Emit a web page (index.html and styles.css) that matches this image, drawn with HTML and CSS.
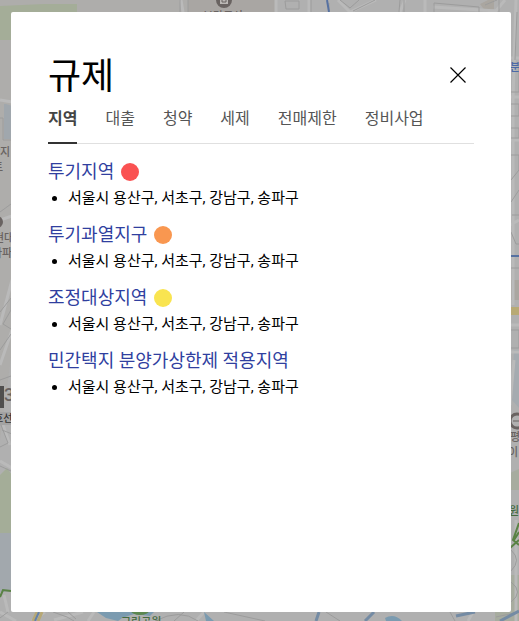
FILE: index.html
```
<!DOCTYPE html>
<html lang="ko">
<head>
  <meta charset="UTF-8">
  <meta name="viewport" content="width=device-width, initial-scale=1">
  <title>규제</title>
  <link rel="stylesheet" href="styles.css">
</head>
<body>
  <!-- Map behind the modal -->
  <svg class="map" viewBox="0 0 519 621" preserveAspectRatio="xMidYMid slice" aria-hidden="true">
    <rect width="519" height="621" fill="#aeadab"/>
    <path d="M276 0H519V621H0V440L12 350V250L276 12Z" fill="#b0b0b0"/>
    <path d="M0 6L44 4H77V40H0Z" fill="#a4ad98"/>
    <path d="M188 0H276V14H188Z" fill="#a9a6a3"/>
    <path d="M0 533H12V592H0Z" fill="#a2a8ad"/>
    <path d="M0 475L7 468L12 475V533H0Z" fill="#a4ad98"/>
    <path d="M510 473L519 469V490H510ZM510 575H519V621H495V612H510Z" fill="#a7ac9f"/>
    <path d="M510 280H519V300H510Z" fill="#aaa6a0"/>
    <path d="M514 350H519V408L512 400Z" fill="#a5abb0"/>
    <path d="M6 104L12 106V139H4V104Z" fill="#a0a7ad"/>
    <path d="M480 4L488 0H494V9L486 12Z" fill="#aaa6a0"/>

    <!-- roads -->
    <g fill="none" stroke="#bababa" stroke-width="3">
      <path d="M181 0L183 12M276 0V12M309 0V12M338 0L350 12M376 0L350 12M405 0L400 12M425 0V12M433 7L497 11M505 0L495 12M516 0L513 100V305M510 58H519M510 97H519M510 140H519M510 225L519 220"/>
      <path d="M0 220L12 216M0 325L12 280M0 365L12 330M3 425L10 445M0 461L12 468M510 325H519M510 352H519M510 405L514 360M516 520V621M0 100L12 102"/>
      <path d="M0 612L16 621M4 595L8 612M45 612L32 621M54 620L83 612M88 621L94 612M196 621L204 612M468 621L473 612"/>
    </g>
    <g fill="none" stroke="#9c9c9c" stroke-width="1">
      <path d="M180 0V12M188 0V12M285 1H299V9H286ZM311 0V12M329 12V3M340 0L350 8L359 0M353 11L375 0M400 0L399 12M404 0V12M434 3L479 7V12M434 3V12M497 0L485 5M499 0V12"/>
      <path d="M517 12L515 60M511 63H519V92H511M511 104H519V116H511M511 128H519V138H511M511 155H519V170L511 180M519 190L511 202M512 215H519M511 232L516 244H519M511 268H519M511 310H519M511 330H519V348H511"/>
      <path d="M0 118H3V140H11M0 212L11 204M0 312L11 298V310L3 324L11 329M0 350L11 334M0 380L11 376M1 425L8 443L0 447M0 466L11 471M2 430L12 434"/>
      <path d="M0 618L8 612M53 612L67 617L74 621M68 612L76 619M184 612L174 621M224 612L265 621M326 612L340 621M450 612L455 621M496 617L519 612"/>
      <path d="M155 621Q180 608 198 621M511 550Q522 560 511 571M511 582Q524 592 511 602"/>
    </g>
    <path d="M37 612L33 621M42 612L38 621" stroke="#b7a875" stroke-width="3"/>
    <path d="M39 612L35 621" stroke="#6481a8" stroke-width="2"/>
    <path d="M510 307H519V315H510Z" fill="#b8aa75"/>
    <path d="M327 0L329 12M510 256H519" stroke="#5671a1" stroke-width="2"/>
    <path d="M319 612L316 621M374 612L365 621M456 616L475 612M500 621L519 611" fill="none" stroke="#748ba4" stroke-width="3"/>
    <path d="M97 612H154L150 616L134 614L122 618L118 621L106 618ZM204 612L214 621H206ZM385 618Q394 613 402 621H386Z" fill="#7b9bb0"/>
    <ellipse cx="140" cy="611" rx="9" ry="4" fill="#5c8750"/>
    <path d="M0 597L3 590L11 591M519 523L513 540L519 545M510 548L519 540M514 540L519 532" fill="none" stroke="#5a8245" stroke-width="2"/>
    <path d="M0 386H4V408H0Z" fill="#504f4e"/>
    <path d="M0 412H11V425H0Z" fill="#a3a3a3"/>

    <!-- place markers -->
    <circle cx="224" cy="0" r="8" fill="#696361"/>
    <path d="M220 0H228V4H220Z" fill="#bbb8b5"/>
    <path d="M222 0V2H226V0" fill="none" stroke="#696361"/>
    <circle cx="-3" cy="222" r="6" fill="#696361"/>
    <circle cx="517" cy="421" r="7" fill="none" stroke="#696361" stroke-width="3"/>
    <path d="M513 421H519" stroke="#696361"/>

    <g class="map-labels">
      <text x="203" y="20">분당동사</text>
      <text x="-10" y="156">단지</text>
      <text x="-7" y="171">트</text>
      <text x="-6" y="242">현대</text>
      <text x="-8" y="257">아파</text>
      <text x="510" y="441">평</text>
      <text x="508" y="456">이</text>
      <text class="map-number" x="4" y="401">3</text>
      <text class="map-line" x="-6" y="422">호선</text>
      <text class="map-station" x="510" y="71">분</text>
      <text class="map-park" x="121" y="626">그린공원</text>
      <text class="map-park" x="509" y="515">원</text>
    </g>
  </svg>

  <div class="page">
    <section class="modal" role="dialog" aria-labelledby="modal-title">
      <header class="modal-header">
        <h1 id="modal-title">규제</h1>
        <button class="close" type="button" aria-label="닫기">
          <svg width="16" height="16" viewBox="0 0 16 16" aria-hidden="true">
            <path d="M0.5 0.5L15.5 15.5M15.5 0.5L0.5 15.5" fill="none" stroke="#000" stroke-width="1.2"/>
          </svg>
        </button>
      </header>

      <div class="tabs" role="tablist">
        <button class="tab active" type="button" role="tab" aria-selected="true">지역</button>
        <button class="tab" type="button" role="tab" aria-selected="false">대출</button>
        <button class="tab" type="button" role="tab" aria-selected="false">청약</button>
        <button class="tab" type="button" role="tab" aria-selected="false">세제</button>
        <button class="tab" type="button" role="tab" aria-selected="false">전매제한</button>
        <button class="tab" type="button" role="tab" aria-selected="false">정비사업</button>
      </div>

      <div class="areas" role="tabpanel">
        <div class="area">
          <h2>투기지역 <span class="dot red"></span></h2>
          <ul>
            <li>서울시 용산구, 서초구, 강남구, 송파구</li>
          </ul>
        </div>
        <div class="area">
          <h2>투기과열지구 <span class="dot orange"></span></h2>
          <ul>
            <li>서울시 용산구, 서초구, 강남구, 송파구</li>
          </ul>
        </div>
        <div class="area">
          <h2>조정대상지역 <span class="dot yellow"></span></h2>
          <ul>
            <li>서울시 용산구, 서초구, 강남구, 송파구</li>
          </ul>
        </div>
        <div class="area">
          <h2>민간택지 분양가상한제 적용지역</h2>
          <ul>
            <li>서울시 용산구, 서초구, 강남구, 송파구</li>
          </ul>
        </div>
      </div>
    </section>
  </div>
</body>
</html>
```
FILE: styles.css
```
* {
  box-sizing: border-box;
}

body {
  margin: 0;
  font-family: Roboto, "Noto Sans CJK KR", sans-serif;
  color: #000;
  background-color: #afafae;
}

/* Map */
.map {
  position: fixed;
  top: 0;
  left: 0;
  width: 100%;
  height: 100%;
}

.map-labels {
  font-size: 11px;
  font-weight: 500;
  fill: #696361;
}

.map-number {
  font-size: 18px;
}

.map-line {
  font-size: 10px;
  fill: #333;
}

.map-station {
  fill: #4c69a8;
}

.map-park {
  fill: #456b3e;
}

/* Modal */
.page {
  position: relative;
  display: flex;
  min-height: 100vh;
  padding: 12px 8px 9px 11px;
}

.modal {
  flex: 1;
  padding: 36px 37px;
  background-color: #fff;
  border-radius: 2px;
}

.modal-header {
  display: flex;
  justify-content: space-between;
  align-items: center;
}

.modal-header h1 {
  margin: 0;
  padding-top: 4px;
  font-size: 36px;
  font-weight: 400;
  line-height: 50px;
}

.close {
  display: flex;
  padding: 8px;
  border: none;
  background: none;
  cursor: pointer;
}

/* Tabs */
.tabs {
  display: flex;
  gap: 28px;
  border-bottom: 1px solid #e0e0e0;
}

.tab {
  margin-bottom: -1px;
  padding: 4px 0 10px;
  border: none;
  border-bottom: 2px solid transparent;
  background: none;
  font-family: inherit;
  font-size: 16px;
  line-height: 26px;
  color: #555;
  white-space: nowrap;
  cursor: pointer;
}

.tab.active {
  border-bottom-color: #333;
  font-weight: 700;
  color: #444;
}

/* Areas */
.areas {
  display: flex;
  flex-direction: column;
  gap: 10px;
  padding-top: 14px;
}

.area h2 {
  display: flex;
  align-items: center;
  gap: 7px;
  margin: 0;
  font-size: 18px;
  font-weight: 400;
  line-height: 28px;
  color: #303f9f;
}

.area ul {
  margin: 0;
  padding-left: 20px;
  font-size: 15px;
  line-height: 25px;
}

.dot {
  width: 18px;
  height: 18px;
  border-radius: 50%;
}

.red {
  background-color: #fa5252;
}

.orange {
  background-color: #f99750;
}

.yellow {
  background-color: #f9e450;
}
```
